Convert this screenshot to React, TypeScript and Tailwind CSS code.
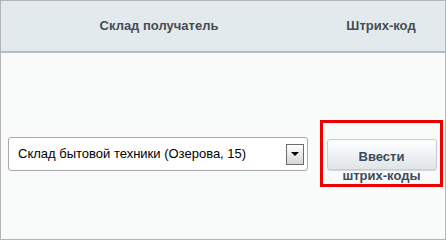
const App = () => {
  return (
    <div className="w-[446px] h-[240px] border border-[#b4b4b4] bg-[#f9fbfa] flex flex-col font-['Liberation_Sans',Arial,sans-serif]">
      <div className="h-[52px] flex border-b-2 border-[#b9bcbe] bg-[#e3eaed] text-[13px] font-bold text-[#474c53]">
        <div className="w-[316px] flex items-center justify-center">Склад получатель</div>
        <div className="flex-1 flex items-center justify-center">Штрих-код</div>
      </div>
      <div className="flex-1 flex items-start pt-[84px]">
        <div className="w-[316px] pl-[7px]">
          <div className="w-[300px] h-[34px] flex items-center justify-between border border-[#a9a9a9] rounded-[3px] bg-white pl-[9px] pr-[3px] text-[13px] text-black">
            <span>Склад бытовой техники (Озерова, 15)</span>
            <div className="w-[18px] h-[21px] border border-[#6b6b6b] bg-gradient-to-b from-white to-[#d6d6d6] flex items-center justify-center">
              <div className="w-0 h-0 border-l-[4px] border-r-[4px] border-t-[4px] border-l-transparent border-r-transparent border-t-black" />
            </div>
          </div>
        </div>
        <div className="-mt-[17px] ml-[3px] w-[123px] h-[67px] border-[3px] border-[#ee0000] flex justify-center pt-[16px]">
          <div className="w-[110px] h-[31px] rounded-[3px] border border-[#c8cdd0] bg-gradient-to-b from-white to-[#dfe5e8] shadow-[0_1px_1px_rgba(0,0,0,0.15)] text-[13px] font-bold text-[#3e4a5a] leading-[19px] text-center pt-[7px]">
            Ввести
            <br />
            штрих-коды
          </div>
        </div>
      </div>
    </div>
  );
};

export default App;
